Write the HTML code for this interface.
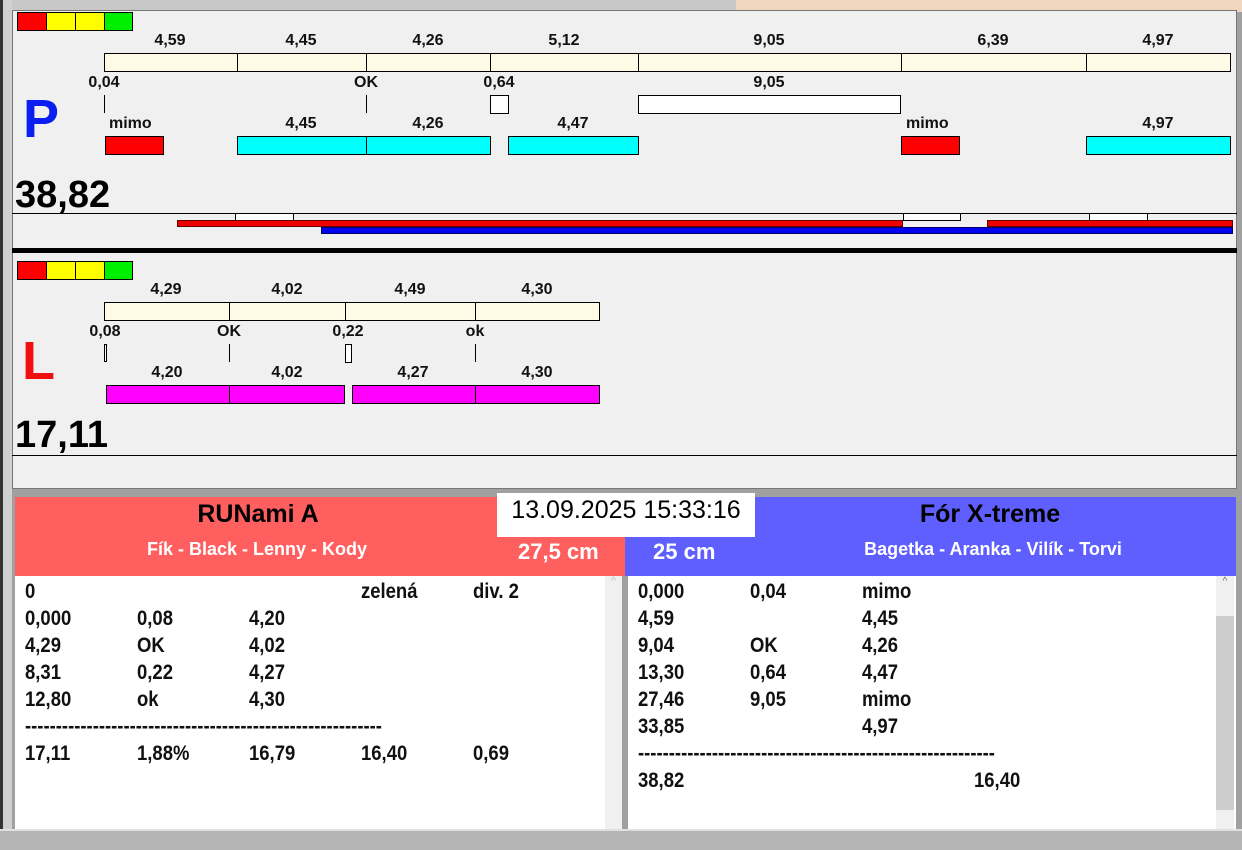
<!DOCTYPE html><html><head><meta charset="utf-8"><style>
*{margin:0;padding:0;box-sizing:border-box}
body{width:1242px;height:850px;background:#a0a0a0;position:relative;overflow:hidden;font-family:"Liberation Sans",sans-serif}
div{position:absolute}
.b{border:1px solid #000}
.t{font-weight:bold;font-size:16px;line-height:16px;transform:translateX(-50%);white-space:nowrap;color:#111}
.tl{font-weight:bold;font-size:16px;line-height:16px;white-space:nowrap;color:#111}
.v{width:1px;background:#000}
.l{font-weight:bold;font-size:21px;line-height:27px;color:#111;white-space:nowrap;transform:scaleX(0.88);transform-origin:0 0}
</style></head><body>
<div style="left:0;top:0;width:1242px;height:12px;background:#c8c8c8"></div>
<div style="left:736px;top:0;width:506px;height:12px;background:#f0d6bc"></div>
<div style="left:0;top:0;width:12px;height:850px;background:#d0d0d0;border-left:3px solid #333"></div>
<!-- P panel -->
<div style="left:12px;top:10px;width:1225px;height:239px;background:#f0f0f0;border:1px solid #777"></div>
<div class="b" style="left:17px;top:12px;width:30px;height:19px;background:#f00"></div>
<div class="b" style="left:46px;top:12px;width:30px;height:19px;background:#ff0"></div>
<div class="b" style="left:75px;top:12px;width:30px;height:19px;background:#ff0"></div>
<div class="b" style="left:104px;top:12px;width:29px;height:19px;background:#0e0"></div>
<div class="b" style="left:104px;top:53px;width:1127px;height:19px;background:#fffbe6"></div>
<div class="v" style="left:237px;top:53px;height:19px"></div><div class="v" style="left:366px;top:53px;height:19px"></div><div class="v" style="left:490px;top:53px;height:19px"></div><div class="v" style="left:638px;top:53px;height:19px"></div><div class="v" style="left:901px;top:53px;height:19px"></div><div class="v" style="left:1086px;top:53px;height:19px"></div>
<div class="t" style="left:170px;top:33px">4,59</div><div class="t" style="left:301px;top:33px">4,45</div><div class="t" style="left:428px;top:33px">4,26</div><div class="t" style="left:564px;top:33px">5,12</div><div class="t" style="left:769px;top:33px">9,05</div><div class="t" style="left:993px;top:33px">6,39</div><div class="t" style="left:1158px;top:33px">4,97</div>
<div class="t" style="left:104px;top:75px">0,04</div><div class="t" style="left:366px;top:75px">OK</div><div class="t" style="left:499px;top:75px">0,64</div><div class="t" style="left:769px;top:75px">9,05</div>
<div class="v" style="left:104px;top:95px;height:18px"></div><div class="v" style="left:366px;top:95px;height:18px"></div>
<div class="b" style="left:490px;top:95px;width:19px;height:19px;background:#fff"></div>
<div class="b" style="left:638px;top:95px;width:263px;height:19px;background:#fff"></div>
<div style="left:23px;top:89px;font-size:54px;line-height:60px;font-weight:bold;color:#0a1ef0">P</div>
<div class="tl" style="left:109px;top:116px">mimo</div><div class="t" style="left:301px;top:116px">4,45</div><div class="t" style="left:428px;top:116px">4,26</div><div class="t" style="left:573px;top:116px">4,47</div><div class="tl" style="left:906px;top:116px">mimo</div><div class="t" style="left:1158px;top:116px">4,97</div>
<div class="b" style="left:105px;top:136px;width:59px;height:19px;background:#f00"></div>
<div class="b" style="left:237px;top:136px;width:130px;height:19px;background:#0ff"></div>
<div class="b" style="left:366px;top:136px;width:125px;height:19px;background:#0ff"></div>
<div class="b" style="left:508px;top:136px;width:131px;height:19px;background:#0ff"></div>
<div class="b" style="left:901px;top:136px;width:59px;height:19px;background:#f00"></div>
<div class="b" style="left:1086px;top:136px;width:145px;height:19px;background:#0ff"></div>
<div style="left:15px;top:175px;font-size:38px;line-height:40px;font-weight:bold;color:#000">38,82</div>
<div style="left:12px;top:213px;width:1225px;height:1px;background:#000"></div>
<div class="b" style="left:235px;top:213px;width:59px;height:8px;background:#fff"></div>
<div class="b" style="left:903px;top:213px;width:58px;height:8px;background:#fff"></div>
<div class="b" style="left:1089px;top:213px;width:59px;height:8px;background:#fff"></div>
<div style="left:177px;top:220px;width:726px;height:7px;background:#e00;border:1px solid #600"></div>
<div style="left:987px;top:220px;width:246px;height:7px;background:#e00;border:1px solid #600"></div>
<div style="left:321px;top:227px;width:912px;height:7px;background:#00e;border:1px solid #006"></div>
<div style="left:12px;top:248px;width:1225px;height:5px;background:#000"></div>
<!-- L panel -->
<div style="left:12px;top:253px;width:1225px;height:236px;background:#f0f0f0;border:1px solid #777;border-top:none"></div>
<div class="b" style="left:17px;top:261px;width:30px;height:19px;background:#f00"></div>
<div class="b" style="left:46px;top:261px;width:30px;height:19px;background:#ff0"></div>
<div class="b" style="left:75px;top:261px;width:30px;height:19px;background:#ff0"></div>
<div class="b" style="left:104px;top:261px;width:29px;height:19px;background:#0e0"></div>
<div class="b" style="left:104px;top:302px;width:496px;height:19px;background:#fffbe6"></div>
<div class="v" style="left:229px;top:302px;height:19px"></div><div class="v" style="left:345px;top:302px;height:19px"></div><div class="v" style="left:475px;top:302px;height:19px"></div>
<div class="t" style="left:166px;top:282px">4,29</div><div class="t" style="left:287px;top:282px">4,02</div><div class="t" style="left:410px;top:282px">4,49</div><div class="t" style="left:537px;top:282px">4,30</div>
<div class="t" style="left:105px;top:324px">0,08</div><div class="t" style="left:229px;top:324px">OK</div><div class="t" style="left:348px;top:324px">0,22</div><div class="t" style="left:475px;top:324px">ok</div>
<div class="b" style="left:104px;top:344px;width:3px;height:18px;background:#fff"></div>
<div class="v" style="left:229px;top:344px;height:18px"></div>
<div class="b" style="left:345px;top:344px;width:7px;height:19px;background:#fff"></div>
<div class="v" style="left:475px;top:344px;height:18px"></div>
<div style="left:22px;top:331px;font-size:54px;line-height:60px;font-weight:bold;color:#f01010">L</div>
<div class="t" style="left:167px;top:365px">4,20</div><div class="t" style="left:287px;top:365px">4,02</div><div class="t" style="left:413px;top:365px">4,27</div><div class="t" style="left:537px;top:365px">4,30</div>
<div class="b" style="left:106px;top:385px;width:124px;height:19px;background:#f0f"></div>
<div class="b" style="left:229px;top:385px;width:116px;height:19px;background:#f0f"></div>
<div class="b" style="left:352px;top:385px;width:124px;height:19px;background:#f0f"></div>
<div class="b" style="left:475px;top:385px;width:125px;height:19px;background:#f0f"></div>
<div style="left:15px;top:415px;font-size:38px;line-height:40px;font-weight:bold;color:#000">17,11</div>
<div style="left:12px;top:455px;width:1225px;height:1px;background:#000"></div>
<!-- header -->
<div style="left:15px;top:497px;width:610px;height:79px;background:#ff5f5f"></div>
<div style="left:625px;top:497px;width:611px;height:79px;background:#5f5fff"></div>
<div style="left:497px;top:493px;width:258px;height:44px;background:#fff;font-size:25px;line-height:34px;text-align:center;color:#000">13.09.2025 15:33:16</div>
<div class="t" style="left:258px;top:500px;font-size:25px;line-height:28px;color:#000">RUNami A</div>
<div class="t" style="left:257px;top:539px;font-size:18px;line-height:20px;color:#fff">Fík - Black - Lenny - Kody</div>
<div class="tl" style="left:518px;top:540px;font-size:22px;line-height:24px;color:#fff">27,5 cm</div>
<div class="t" style="left:990px;top:500px;font-size:25px;line-height:28px;color:#000">Fór X-treme</div>
<div class="t" style="left:993px;top:539px;font-size:18px;line-height:20px;color:#fff">Bagetka - Aranka - Vilík - Torvi</div>
<div class="tl" style="left:653px;top:540px;font-size:22px;line-height:24px;color:#fff">25 cm</div>
<!-- lists -->
<div style="left:15px;top:576px;width:607px;height:253px;background:#fff;border-right:1px solid #ddd"></div>
<div style="left:605px;top:576px;width:17px;height:253px;background:#f0f0f0;color:#bbb;font-size:10px;text-align:center">^</div>
<div style="left:628px;top:576px;width:608px;height:253px;background:#fff"></div>
<div style="left:1216px;top:576px;width:18px;height:253px;background:#f0f0f0;color:#666;font-size:10px;text-align:center">^</div>
<div style="left:1216px;top:616px;width:18px;height:194px;background:#cdcdcd"></div>
<div style="left:0;top:829px;width:1242px;height:21px;background:#b4b4b4;border-top:2px solid #e0e0e0"></div>
<div class="l" style="left:25px;top:578px">0<br>0,000<br>4,29<br>8,31<br>12,80<br>----------------------------------------------------------<br>17,11</div>
<div class="l" style="left:137px;top:605px">0,08<br>OK<br>0,22<br>ok<br><br>1,88%</div>
<div class="l" style="left:249px;top:605px">4,20<br>4,02<br>4,27<br>4,30<br><br>16,79</div>
<div class="l" style="left:361px;top:578px">zelená<br><br><br><br><br><br>16,40</div>
<div class="l" style="left:473px;top:578px">div. 2<br><br><br><br><br><br>0,69</div>
<div class="l" style="left:638px;top:578px">0,000<br>4,59<br>9,04<br>13,30<br>27,46<br>33,85<br>----------------------------------------------------------<br>38,82</div>
<div class="l" style="left:750px;top:578px">0,04<br><br>OK<br>0,64<br>9,05</div>
<div class="l" style="left:862px;top:578px">mimo<br>4,45<br>4,26<br>4,47<br>mimo<br>4,97</div>
<div class="l" style="left:974px;top:767px">16,40</div>
</body></html>
